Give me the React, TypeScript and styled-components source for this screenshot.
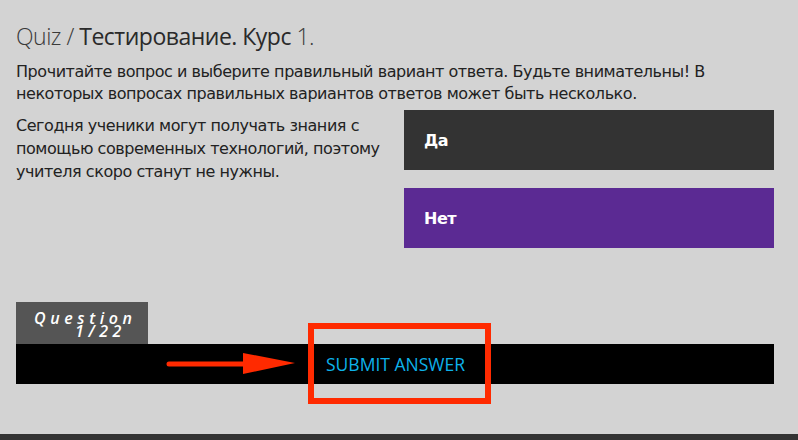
import React from 'react';
import styled, { createGlobalStyle } from 'styled-components';

const GlobalStyle = createGlobalStyle`
  html, body { margin: 0; padding: 0; background: #d3d3d3; }
  body { font-family: "DejaVu Sans", Tahoma, sans-serif; color: #222; }
`;

// --- layout ---
const Page = styled.div`
  position: relative;
  width: 798px;
  height: 440px;
  overflow: hidden;
  background: #d3d3d3;
  display: flex;
  flex-direction: column;
`;

const Main = styled.main`
  flex: 1;
  padding: 20px 24px 0 16px;
`;

const Title = styled.h1`
  margin: 0;
  font-family: "Open Sans", "Noto Sans", sans-serif;
  font-size: 23px;
  line-height: 32px;
  font-weight: 300;
  color: #333;
  letter-spacing: -0.5px;
`;

const Crumb = styled.span<{ $strong?: boolean }>`
  font-weight: ${p => (p.$strong ? 400 : 300)};
  color: ${p => (p.$strong ? '#2a2a2a' : '#3a3a3a')};
`;

const Instructions = styled.p`
  margin: 9px 0 0;
  font-size: 16px;
  line-height: 22px;
  color: #222;
  letter-spacing: -0.45px;
`;

const QuestionRow = styled.div`
  display: grid;
  grid-template-columns: 388px 370px;
  margin-top: 5px;
`;

const QuestionText = styled.p`
  margin: 0;
  padding-top: 4px;
  width: 380px;
  font-size: 16px;
  line-height: 23px;
  color: #222;
  letter-spacing: -0.45px;
`;

const Answers = styled.div`
  display: flex;
  flex-direction: column;
  gap: 18px;
`;

const Answer = styled.button<{ $selected?: boolean }>`
  height: 60px;
  border: none;
  padding: 0 20px;
  text-align: left;
  font-family: "DejaVu Sans", Tahoma, sans-serif;
  font-size: 16px;
  font-weight: bold;
  letter-spacing: -0.5px;
  color: #fff;
  background: ${p => (p.$selected ? '#5b2a93' : '#333333')};
  cursor: pointer;
`;

// --- bottom bar ---
const Footer = styled.div`
  position: relative;
  margin-top: 54px;
`;

const Counter = styled.div`
  width: 132px;
  height: 42px;
  background: #555;
  color: #fff;
  font-family: "Open Sans", "Noto Sans", sans-serif;
  font-style: italic;
  font-weight: 600;
  font-size: 16px;
  letter-spacing: 4.6px;
  line-height: 13px;
  padding-top: 10px;
  box-sizing: border-box;
`;

const CounterLine = styled.span<{ $indent: number }>`
  display: block;
  padding-left: ${p => p.$indent}px;
`;

const ActionBar = styled.div`
  height: 40px;
  background: #000;
  display: flex;
  align-items: center;
  padding-left: 310px;
`;

const SubmitButton = styled.button`
  border: none;
  background: none;
  padding: 0;
  font-family: "Open Sans", "Noto Sans", sans-serif;
  font-size: 17.5px;
  letter-spacing: 0;
  color: #0db2ea;
  cursor: pointer;
`;

// annotation overlays
const Highlight = styled.div`
  position: absolute;
  left: 292px;
  top: 21px;
  width: 171px;
  height: 69px;
  border: 6px solid #ff2a00;
  pointer-events: none;
`;

const Arrow = styled.svg`
  position: absolute;
  left: 148px;
  top: 50px;
  pointer-events: none;
`;

const BottomStrip = styled.div`
  height: 6px;
  background: #333;
`;

export default function App() {
  return (
    <>
      <GlobalStyle />
      <Page>
        <Main>
          <Title>
            <Crumb>Quiz / </Crumb>
            <Crumb $strong>Тестирование. Курс</Crumb>
            <Crumb> 1.</Crumb>
          </Title>
          <Instructions>
            Прочитайте вопрос и выберите правильный вариант ответа. Будьте внимательны! В
            некоторых вопросах правильных вариантов ответов может быть несколько.
          </Instructions>
          <QuestionRow>
            <QuestionText>
              Сегодня ученики могут получать знания с помощью современных технологий, поэтому
              учителя скоро станут не нужны.
            </QuestionText>
            <Answers>
              <Answer>Да</Answer>
              <Answer $selected>Нет</Answer>
            </Answers>
          </QuestionRow>
          <Footer>
            <Counter>
              <CounterLine $indent={18}>Question</CounterLine>
              <CounterLine $indent={59}>1/22</CounterLine>
            </Counter>
            <ActionBar>
              <SubmitButton>SUBMIT ANSWER</SubmitButton>
            </ActionBar>
            <Arrow width="134" height="24" viewBox="0 0 134 24">
              <line x1="5" y1="12" x2="82" y2="12" stroke="#ff2a00" strokeWidth="5" strokeLinecap="round" />
              <polygon points="79,1 131,11 79,22" fill="#ff2a00" />
            </Arrow>
            <Highlight />
          </Footer>
        </Main>
        <BottomStrip />
      </Page>
    </>
  );
}
